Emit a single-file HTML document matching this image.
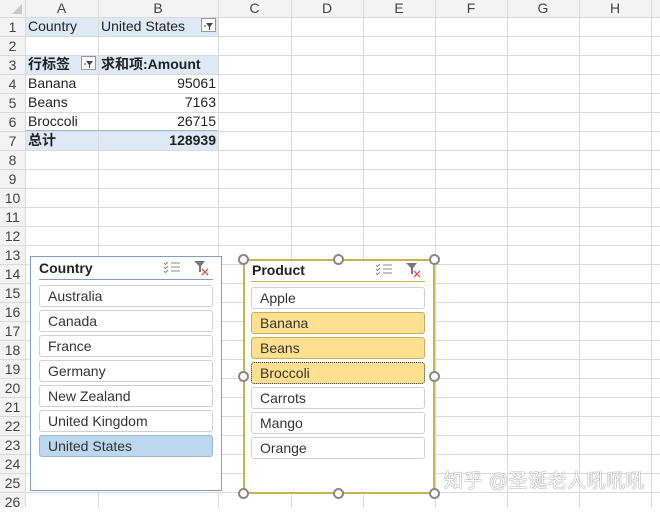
<!DOCTYPE html>
<html><head><meta charset="utf-8"><style>
*{margin:0;padding:0;box-sizing:border-box}
body{width:660px;height:507px;overflow:hidden;background:#fff;position:relative;font-family:"Liberation Sans","Noto Sans CJK SC",sans-serif;font-size:14px;color:#222}
.a{position:absolute}
.vl{position:absolute;top:0;width:1px;height:507px;background:#dadada}
.hl{position:absolute;left:0;width:660px;height:1px;background:#dadada}
.ch{position:absolute;top:0;height:17px;line-height:17px;text-align:center;color:#444;font-size:14px}
.rh{position:absolute;left:0;width:25px;height:19px;line-height:20px;text-align:center;color:#444;font-size:14px}
.c{position:absolute;height:19px;line-height:19px;font-size:14px;white-space:nowrap}
.it{position:absolute;height:22px;border:1px solid #d0d0d0;border-radius:3px;background:#fff;line-height:20px;padding-left:8px;font-size:14px;color:#333}
.h{position:absolute;width:11px;height:11px;border:2px solid #888;border-radius:50%;background:#fff}
</style></head><body>
<div class="a" style="left:0;top:0;width:660px;height:17px;background:#f3f3f3"></div>
<div class="a" style="left:0;top:0;width:25px;height:507px;background:#f3f3f3"></div>
<div class="a" style="left:25px;top:17px;width:193px;height:19px;background:#dde9f5"></div>
<div class="a" style="left:25px;top:55px;width:193px;height:19px;background:#dde9f5"></div>
<div class="a" style="left:25px;top:131px;width:193px;height:19px;background:#dde9f5"></div>
<div class="vl" style="left:25px"></div><div class="vl" style="left:98px"></div><div class="vl" style="left:218px"></div><div class="vl" style="left:291px"></div><div class="vl" style="left:363px"></div><div class="vl" style="left:435px"></div><div class="vl" style="left:507px"></div><div class="vl" style="left:579px"></div><div class="vl" style="left:651px"></div>
<div class="hl" style="top:17px"></div><div class="hl" style="top:36px"></div><div class="hl" style="top:55px"></div><div class="hl" style="top:74px"></div><div class="hl" style="top:93px"></div><div class="hl" style="top:112px"></div><div class="hl" style="top:131px"></div><div class="hl" style="top:150px"></div><div class="hl" style="top:169px"></div><div class="hl" style="top:188px"></div><div class="hl" style="top:207px"></div><div class="hl" style="top:226px"></div><div class="hl" style="top:245px"></div><div class="hl" style="top:264px"></div><div class="hl" style="top:283px"></div><div class="hl" style="top:302px"></div><div class="hl" style="top:321px"></div><div class="hl" style="top:340px"></div><div class="hl" style="top:359px"></div><div class="hl" style="top:378px"></div><div class="hl" style="top:397px"></div><div class="hl" style="top:416px"></div><div class="hl" style="top:435px"></div><div class="hl" style="top:454px"></div><div class="hl" style="top:473px"></div><div class="hl" style="top:492px"></div>
<div class="a" style="left:25px;top:130px;width:193px;height:1px;background:#9dbbe0"></div>
<svg class="a" style="left:12px;top:4px" width="10" height="10"><path d="M10 0L10 10L0 10Z" fill="#c8c8c8"/></svg>
<div class="ch" style="left:25px;width:73px">A</div><div class="ch" style="left:98px;width:120px">B</div><div class="ch" style="left:218px;width:73px">C</div><div class="ch" style="left:291px;width:72px">D</div><div class="ch" style="left:363px;width:72px">E</div><div class="ch" style="left:435px;width:72px">F</div><div class="ch" style="left:507px;width:72px">G</div><div class="ch" style="left:579px;width:72px">H</div>
<div class="rh" style="top:17px">1</div><div class="rh" style="top:36px">2</div><div class="rh" style="top:55px">3</div><div class="rh" style="top:74px">4</div><div class="rh" style="top:93px">5</div><div class="rh" style="top:112px">6</div><div class="rh" style="top:131px">7</div><div class="rh" style="top:150px">8</div><div class="rh" style="top:169px">9</div><div class="rh" style="top:188px">10</div><div class="rh" style="top:207px">11</div><div class="rh" style="top:226px">12</div><div class="rh" style="top:245px">13</div><div class="rh" style="top:264px">14</div><div class="rh" style="top:283px">15</div><div class="rh" style="top:302px">16</div><div class="rh" style="top:321px">17</div><div class="rh" style="top:340px">18</div><div class="rh" style="top:359px">19</div><div class="rh" style="top:378px">20</div><div class="rh" style="top:397px">21</div><div class="rh" style="top:416px">22</div><div class="rh" style="top:435px">23</div><div class="rh" style="top:454px">24</div><div class="rh" style="top:473px">25</div><div class="rh" style="top:492px">26</div>
<div class="c" style="left:28px;top:17px">Country</div>
<div class="c" style="left:101px;top:17px">United States</div>
<div class="a" style="left:201px;top:18px;width:15px;height:14px;border:1px solid #999;background:#fff"><svg width="13" height="12"><path d="M4 3h7l-3 4v3h-1v-3z" fill="#444"/><path d="M2 6h2" stroke="#444"/></svg></div>
<div class="c" style="left:28px;top:55px;font-weight:bold">行标签</div>
<div class="a" style="left:81px;top:56px;width:15px;height:14px;border:1px solid #999;background:#fff"><svg width="13" height="12"><path d="M4 3h7l-3 4v3h-1v-3z" fill="#444"/><path d="M2 6h2" stroke="#444"/></svg></div>
<div class="c" style="left:101px;top:55px;font-weight:bold">求和项:Amount</div>
<div class="c" style="left:28px;top:74px">Banana</div><div class="c" style="left:98px;width:118px;text-align:right;top:74px">95061</div>
<div class="c" style="left:28px;top:93px">Beans</div><div class="c" style="left:98px;width:118px;text-align:right;top:93px">7163</div>
<div class="c" style="left:28px;top:112px">Broccoli</div><div class="c" style="left:98px;width:118px;text-align:right;top:112px">26715</div>
<div class="c" style="left:28px;top:131px;font-weight:bold">总计</div><div class="c" style="left:98px;width:118px;text-align:right;top:131px;font-weight:bold">128939</div>

<div class="a" style="left:30px;top:256px;width:192px;height:235px;background:#fff;border:1px solid #7fa2c4"></div>
<div class="a" style="left:39px;top:259px;font-weight:bold;font-size:14px;line-height:18px">Country</div>
<div class="a" style="left:39px;top:279px;width:174px;height:1px;background:#7fa2c4"></div>
<svg class="a" style="left:163px;top:261px" width="18" height="14"><path d="M1 2l1.5 1.5L5 1M1 6l1.5 1.5L5 5M1 10l1.5 1.5L5 9" stroke="#888" fill="none"/><path d="M8 2h9M8 6h9M8 10h9" stroke="#888"/></svg>
<svg class="a" style="left:193px;top:260px" width="18" height="16"><path d="M1 1h11l-4 5v6h-2v-6z" fill="#777"/><path d="M9 9l6 6M15 9l-6 6" stroke="#d9534f" stroke-width="1.3"/></svg>
<div class="it" style="left:39px;top:285px;width:174px">Australia</div>
<div class="it" style="left:39px;top:310px;width:174px">Canada</div>
<div class="it" style="left:39px;top:335px;width:174px">France</div>
<div class="it" style="left:39px;top:360px;width:174px">Germany</div>
<div class="it" style="left:39px;top:385px;width:174px">New Zealand</div>
<div class="it" style="left:39px;top:410px;width:174px">United Kingdom</div>
<div class="it" style="left:39px;top:435px;width:174px;background:#bdd7ee;border-color:#9cb8d6">United States</div>

<div class="a" style="left:243px;top:259px;width:192px;height:235px;background:#fff;border:2px solid #c8b44a"></div>
<div class="a" style="left:252px;top:261px;font-weight:bold;font-size:14px;line-height:18px">Product</div>
<div class="a" style="left:251px;top:281px;width:174px;height:1px;background:#c8b44a"></div>
<svg class="a" style="left:375px;top:263px" width="18" height="14"><path d="M1 2l1.5 1.5L5 1M1 6l1.5 1.5L5 5M1 10l1.5 1.5L5 9" stroke="#888" fill="none"/><path d="M8 2h9M8 6h9M8 10h9" stroke="#888"/></svg>
<svg class="a" style="left:405px;top:262px" width="18" height="16"><path d="M1 1h11l-4 5v6h-2v-6z" fill="#777"/><path d="M9 9l6 6M15 9l-6 6" stroke="#d9534f" stroke-width="1.3"/></svg>
<div class="it" style="left:251px;top:287px;width:174px">Apple</div>
<div class="it" style="left:251px;top:312px;width:174px;background:#ffe08f;border-color:#c9ad5e">Banana</div>
<div class="it" style="left:251px;top:337px;width:174px;background:#ffe08f;border-color:#c9ad5e">Beans</div>
<div class="it" style="left:251px;top:362px;width:174px;background:#ffe08f;border:1px dotted #333">Broccoli</div>
<div class="it" style="left:251px;top:387px;width:174px">Carrots</div>
<div class="it" style="left:251px;top:412px;width:174px">Mango</div>
<div class="it" style="left:251px;top:437px;width:174px">Orange</div>
<div class="h" style="left:238px;top:254px"></div><div class="h" style="left:333px;top:254px"></div><div class="h" style="left:429px;top:254px"></div>
<div class="h" style="left:238px;top:371px"></div><div class="h" style="left:429px;top:371px"></div>
<div class="h" style="left:238px;top:488px"></div><div class="h" style="left:333px;top:488px"></div><div class="h" style="left:429px;top:488px"></div>

<div class="a" style="left:444px;top:466px;font-size:19px;letter-spacing:0.5px;color:#fff;text-shadow:0 0 1px #777,0 0 1px #777;white-space:nowrap;font-family:'Liberation Sans','Noto Sans CJK SC',sans-serif">知乎 @圣诞老人吼吼吼</div>
</body></html>
